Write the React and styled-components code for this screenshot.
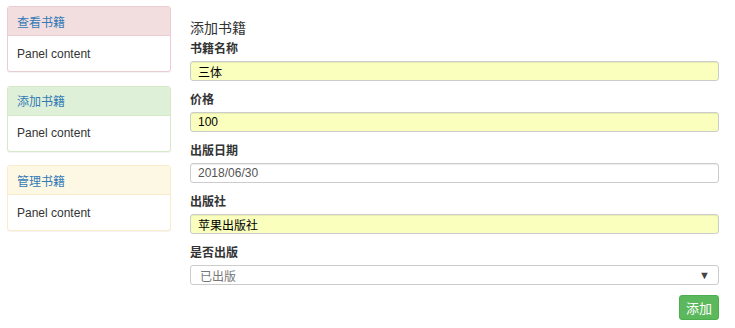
import React from 'react'
import styled, { createGlobalStyle } from 'styled-components'

const GlobalStyle = createGlobalStyle`
    body {
        margin: 0;
        background: #fff;
        font-family: "Liberation Sans", Arial, "Noto Sans CJK SC", sans-serif;
        font-size: 12px;
        color: #333;
    }
`

const panelColors = {
    danger: { bg: '#f2dede', border: '#ebccd1' },
    success: { bg: '#dff0d8', border: '#d6e9c6' },
    warning: { bg: '#fcf8e3', border: '#faebcc' },
}

const fields = [
    { label: '书籍名称', value: '三体', filled: true },
    { label: '价格', value: '100', filled: true },
    { label: '出版日期', value: '2018/06/30', filled: false },
    { label: '出版社', value: '苹果出版社', filled: true },
]

const App = () => {
    return (
        <>
            <GlobalStyle />
            <Page>
                <Sidebar>
                    <Panel kind="danger" title="查看书籍" />
                    <Panel kind="success" title="添加书籍" />
                    <Panel kind="warning" title="管理书籍" />
                </Sidebar>
                <Main>
                    <Title>添加书籍</Title>
                    {fields.map(f => (
                        <Field key={f.label}>
                            <Label>{f.label}</Label>
                            <Input filled={f.filled}>{f.value}</Input>
                        </Field>
                    ))}
                    <Field>
                        <Label>是否出版</Label>
                        <Select>
                            <SelectText>已出版</SelectText>
                            <Caret>▼</Caret>
                        </Select>
                    </Field>
                    <Actions>
                        <Button>添加</Button>
                    </Actions>
                </Main>
            </Page>
        </>
    )
}

const Panel = ({ kind, title }) => (
    <PanelBox kind={kind}>
        <PanelHeading kind={kind}>{title}</PanelHeading>
        <PanelBody>Panel content</PanelBody>
    </PanelBox>
)

export default App

const Page = styled.div`
    display: flex;
    align-items: flex-start;
    padding: 6px 16px 0 7px;
    width: 735px;
    box-sizing: border-box;
`
const Sidebar = styled.div`
    width: 164px;
    flex-shrink: 0;
    display: flex;
    flex-direction: column;
    gap: 13.5px;
`
const PanelBox = styled.div`
    border: 1px solid ${p => panelColors[p.kind].border};
    border-radius: 3px;
    background: #fff;
    box-shadow: 0 1px 1px rgba(0,0,0,0.05);
`
const PanelHeading = styled.div`
    height: 29px;
    box-sizing: border-box;
    display: flex;
    align-items: center;
    padding: 0 9px;
    background: ${p => panelColors[p.kind].bg};
    border-bottom: 1px solid ${p => panelColors[p.kind].border};
    border-radius: 2px 2px 0 0;
    color: #337ab7;
    font-family: "Noto Sans CJK SC", sans-serif;
    font-size: 12px;
`
const PanelBody = styled.div`
    height: 35px;
    display: flex;
    align-items: center;
    padding: 0 9px;
    color: #333;
    font-size: 12px;
`
const Main = styled.div`
    flex: 1;
    margin-left: 19px;
    padding-top: 13px;
    display: flex;
    flex-direction: column;
`
const Title = styled.div`
    font-family: "Noto Sans CJK SC", sans-serif;
    font-size: 14px;
    line-height: 16px;
    color: #333;
    margin-bottom: 5px;
`
const Field = styled.div`
    display: flex;
    flex-direction: column;
    margin-bottom: 10px;
`
const Label = styled.div`
    font-family: "Noto Sans CJK SC", sans-serif;
    font-weight: bold;
    font-size: 12px;
    line-height: 16px;
    color: #333;
    margin-bottom: 5px;
`
const Input = styled.div`
    height: 20px;
    box-sizing: border-box;
    border: 1px solid #ccc;
    border-radius: 3px;
    padding: 0 7px;
    display: flex;
    align-items: center;
    background: ${p => (p.filled ? '#faffbd' : '#fff')};
    color: ${p => (p.filled ? '#000' : '#555')};
    font-family: "Liberation Sans", Arial, "Noto Sans CJK SC", sans-serif;
    font-size: 12px;
    box-shadow: inset 0 1px 1px rgba(0,0,0,0.075);
`
const Select = styled.div`
    height: 20px;
    box-sizing: border-box;
    border: 1px solid #ccc;
    border-radius: 3px;
    display: flex;
    justify-content: space-between;
    align-items: flex-start;
    overflow: hidden;
    padding: 0 8px 0 9px;
    background: #fff;
`
const SelectText = styled.span`
    font-family: "Noto Sans CJK SC", sans-serif;
    font-size: 12px;
    line-height: 16px;
    padding-top: 2px;
    color: #777;
`
const Caret = styled.span`
    font-size: 11px;
    line-height: 18px;
    color: #444;
`
const Actions = styled.div`
    display: flex;
    justify-content: flex-end;
`
const Button = styled.button`
    height: 25px;
    width: 40px;
    padding: 0;
    border: 1px solid #4cae4c;
    border-radius: 3px;
    background: #5cb85c;
    color: #fff;
    font-family: "Noto Sans CJK SC", sans-serif;
    font-size: 13px;
`
